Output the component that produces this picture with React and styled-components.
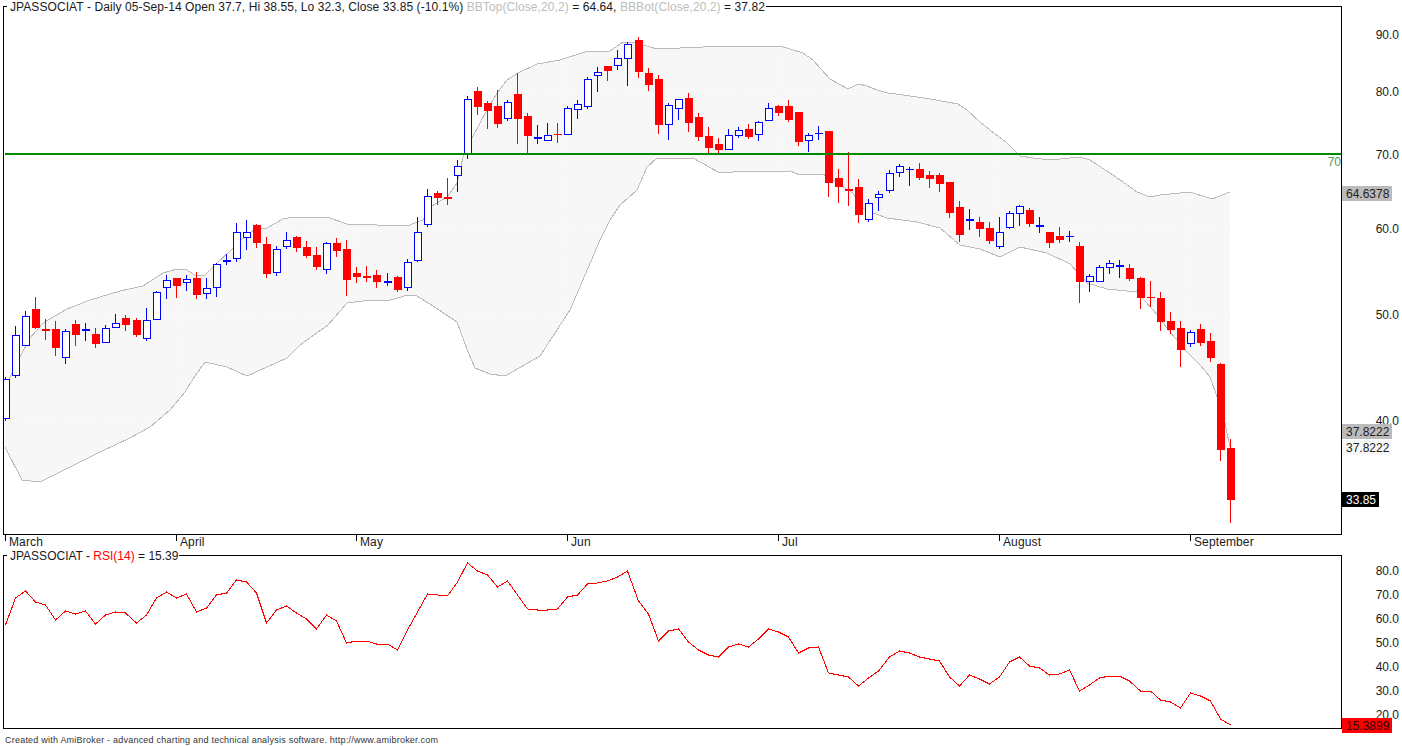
import React from "react";
import styled, { createGlobalStyle } from "styled-components";

// [high, top, bottom, low, up] in chart pixels, read off the picture
const bars = [
  [377,379,418,420,1],[326,335,375,377,1],[311,316,345,345,1],[297,309,328,328,0],[319,329,331,339,0],
  [321,329,348,355,0],[329,331,357,363,1],[320,324,335,345,0],[323,329,331,340,1],[328,334,344,347,0],
  [325,328,342,342,1],[314,323,327,327,1],[315,318,325,330,0],[318,320,335,336,0],[308,320,338,340,1],
  [291,292,319,319,1],[275,280,287,298,1],[278,278,286,297,0],[275,279,282,290,1],[272,278,295,298,0],
  [278,288,293,298,1],[263,264,287,296,1],[254,260,262,264,1],[223,232,258,261,1],[220,232,237,249,1],
  [224,225,243,247,0],[237,244,274,277,0],[246,249,272,275,1],[232,240,246,248,1],[236,237,248,251,0],
  [241,247,256,257,0],[247,255,267,269,0],[242,243,269,273,1],[238,243,251,256,0],[240,249,280,295,0],
  [267,273,277,282,0],[266,276,278,281,0],[270,275,282,287,0],[273,281,283,285,1],[276,277,290,291,0],
  [259,262,287,290,1],[217,232,260,261,1],[189,196,224,226,1],[191,193,198,204,0],[178,197,199,204,0],
  [160,166,175,191,1],[96,99,153,158,1],[87,91,107,114,0],[101,103,111,128,0],[90,106,124,127,0],
  [100,102,118,120,1],[73,94,119,143,0],[113,116,136,153,0],[125,137,139,143,1],[123,135,140,140,1],
  [123,134,135,142,0],[106,108,134,134,1],[100,104,109,118,1],[77,79,106,108,1],[67,72,75,91,1],
  [66,66,71,80,0],[50,58,65,69,1],[42,44,58,85,1],[37,40,72,77,0],[68,73,85,90,0],
  [75,79,125,133,0],[103,105,124,139,1],[99,99,108,119,1],[93,98,123,131,0],[113,117,137,140,0],
  [127,136,148,152,0],[138,144,150,154,0],[129,135,149,149,1],[127,130,135,137,1],[124,129,137,138,0],
  [121,122,134,140,1],[103,108,120,120,1],[105,106,113,115,0],[100,106,120,121,0],[112,112,142,145,0],
  [133,135,140,151,1],[126,133,134,139,1],[131,131,183,196,0],[169,178,187,202,0],[152,189,191,205,0],
  [179,187,215,222,0],[199,203,219,221,1],[191,194,197,210,1],[170,173,190,192,1],[164,166,172,176,1],
  [167,169,170,185,1],[163,169,178,179,0],[171,175,179,187,0],[173,175,184,191,0],[182,182,213,217,0],
  [201,207,235,241,0],[209,219,221,229,1],[217,222,229,236,0],[222,228,241,243,0],[217,232,246,248,1],
  [211,213,227,228,1],[205,206,213,225,1],[208,210,224,226,0],[217,225,227,232,1],[232,232,243,247,0],
  [227,236,240,242,0],[231,236,237,241,1],[242,246,282,302,0],[274,276,281,291,1],[265,267,281,281,1],
  [260,263,267,273,1],[260,265,267,277,1],[264,268,279,280,0],[277,278,298,308,0],[281,297,298,306,0],
  [292,298,322,330,0],[312,321,330,333,0],[321,328,350,366,0],[330,332,343,346,1],[324,329,343,345,0],
  [333,341,358,361,0],[363,364,450,460,0],[439,448,500,522,0],
];

const bandTop = [
  [5,395],[10,377],[20,357],[30,338],[43,323],[67,309],[90,300],[120,291],[143,286],[163,273],[177,269],
  [185,269],[195,275],[205,275],[217,263],[230,251],[245,236],[257,228],[267,228],[283,219],[293,217],
  [327,217],[347,224],[407,226],[423,220],[430,207],[447,197],[457,183],[464,153],[472,138],[487,110],
  [497,93],[507,80],[518,73],[537,64],[560,60],[585,52],[610,51],[623,42],[633,42],[657,49],[703,47],
  [713,46],[780,46],[803,53],[813,60],[830,79],[848,89],[858,84],[867,86],[877,90],[888,93],[903,95],
  [917,97],[930,99],[947,102],[958,104],[967,110],[980,122],[990,130],[1007,143],[1020,156],[1033,158],
  [1050,160],[1080,157],[1090,160],[1113,175],[1137,192],[1150,197],[1160,195],[1190,192],[1212,199],[1230,192],
];

const bandBottom = [
  [5,447],[22,480],[40,482],[60,472],[80,462],[100,452],[130,438],[150,427],[170,410],[185,392],[195,376],[205,362],
  [227,367],[247,376],[287,358],[300,345],[328,325],[347,303],[363,301],[390,300],[408,295],[417,296],
  [433,306],[457,322],[468,352],[475,368],[490,374],[505,376],[540,356],[570,310],[600,240],[610,220],
  [620,205],[637,190],[647,167],[657,158],[693,158],[718,172],[733,172],[790,171],[800,175],[823,174],
  [853,193],[860,207],[873,213],[887,218],[917,222],[940,228],[960,245],[980,249],[1000,257],[1020,247],
  [1047,253],[1070,264],[1087,283],[1107,289],[1137,292],[1153,310],[1170,332],[1187,352],[1200,365],
  [1210,377],[1217,397],[1225,423],[1230,447],
];

const rsi = [
  625,598,591,602,605,620,611,614,611,624,615,612,613,623,615,598,592,598,594,612,
  608,595,593,580,582,593,623,610,606,613,619,629,615,621,643,641,641,644,644,650,
  630,612,594,595,596,582,563,571,575,587,581,595,609,610,610,609,597,595,584,583,
  581,577,571,601,614,641,631,629,642,650,655,657,647,644,647,639,629,632,637,653,
  648,647,673,675,677,686,678,671,657,651,653,657,659,661,677,686,675,679,684,677,
  662,657,666,668,675,674,670,691,685,678,676,676,681,691,691,700,702,708,693,696,
  701,719,725,
];

const months = [
  ["March", 0], ["April", 17], ["May", 35], ["Jun", 56], ["Jul", 77], ["August", 99], ["September", 118],
];

// y = top of the row in page pixels
const priceGrid = [34, 91, 154, 228, 314, 420];
const priceAxis = [
  { y: 28, text: "90.0" },
  { y: 85, text: "80.0" },
  { y: 148, text: "70.0" },
  { y: 186, text: "64.6378", bg: "#bbb", fg: "#222" },
  { y: 222, text: "60.0" },
  { y: 308, text: "50.0" },
  { y: 414, text: "40.0" },
  { y: 424, text: "37.8222", bg: "#bbb", fg: "#222" },
  { y: 440, text: "37.8222", bg: "#f7f7f7", fg: "#222" },
  { y: 492, text: "33.85", bg: "#000", fg: "#fff" },
];
const rsiAxis = [
  { y: 564, text: "80.0" },
  { y: 588, text: "70.0" },
  { y: 612, text: "60.0" },
  { y: 636, text: "50.0" },
  { y: 660, text: "40.0" },
  { y: 684, text: "30.0" },
  { y: 708, text: "20.0" },
  { y: 718, text: "15.3899", bg: "#ff0000", fg: "#300" },
];

const barX = (i) => Math.floor(5.5 + 10.04 * i);
const pts = (list) => list.map((p) => p.join(",")).join(" ");

const GlobalStyle = createGlobalStyle`
  html, body { margin: 0; background: #fff; }
  body { font-family: "Liberation Sans", Arial, sans-serif; color: #1a1a1a; }
`;

const Page = styled.div`
  width: 1402px;
  height: 746px;
  padding: 6px 0 0 3px;
  box-sizing: border-box;
  overflow: hidden;
  font-size: 12px;
`;

const Row = styled.div`
  display: flex;
`;

const Panel = styled.div`
  position: relative;
  box-sizing: border-box;
  width: 1339px;
  height: ${(p) => p.$h}px;
  border: 1px solid #000;
`;

const Plot = styled.svg`
  display: block;
  width: 1337px;
  height: ${(p) => p.$h - 2}px;
  shape-rendering: crispEdges;
`;

const Title = styled.div`
  position: absolute;
  top: -7px;
  left: 3px;
  padding: 0 1px 0 3px;
  background: #fff;
  line-height: 14px;
  white-space: nowrap;
  letter-spacing: ${(p) => p.$track || 0}px;
`;

const Muted = styled.span`
  color: #bdbdbd;
`;

const Hot = styled.span`
  color: #f00;
`;

const LineTag = styled.span`
  position: absolute;
  right: 0;
  top: 148px;
  line-height: 14px;
  color: #3f9f5f;
`;

const Axis = styled.div`
  display: flex;
  flex-direction: column;
  flex: none;
  width: 60px;
  padding-top: ${(p) => p.$top}px;
  box-sizing: border-box;
`;

const AxisRow = styled.div`
  display: flex;
  flex: none;
  justify-content: ${(p) => (p.$tag ? "flex-start" : "flex-end")};
  padding-right: ${(p) => (p.$tag ? 0 : 3)}px;
  line-height: 14px;
`;

const ValueTag = styled.span`
  display: inline-block;
  height: 15px;
  padding: 0 3px 0 4px;
  line-height: 17px;
  background: ${(p) => p.$bg};
  color: ${(p) => p.$fg};
`;

const MonthAxis = styled.div`
  display: flex;
  height: 20px;
  margin-left: 2px;
`;

const Month = styled.div`
  display: flex;
  flex: none;
`;

const Tick = styled.i`
  display: block;
  width: 1px;
  height: 6px;
  background: #000;
`;

const MonthName = styled.span`
  margin-left: 3px;
  line-height: 15px;
  letter-spacing: 0.12px;
`;

const Footer = styled.div`
  padding: 4px 0 0 2px;
  font-size: 9px;
  line-height: 14px;
  letter-spacing: 0.22px;
  color: #333;
  white-space: nowrap;
`;

function Candle({ bar, i }) {
  const [high, top, bottom, low, up] = bar;
  const x = barX(i);
  const color = up ? "#0000ff" : "#ff0000";
  const thin = bottom - top <= 2;
  return (
    <g>
      <rect x={x} y={high} width="1" height={low - high + 1} fill={color} />
      {up && !thin ? (
        <rect x={x - 3 + 0.5} y={top + 0.5} width="7" height={bottom - top} fill="#fff" stroke={color} />
      ) : (
        <rect x={x - 3} y={top} width="8" height={Math.max(bottom - top, 1)} fill={color} />
      )}
    </g>
  );
}

// one flow column of labels, each row as tall as the gap to the next one
function ScaleAxis({ items, start, end }) {
  return (
    <Axis $top={items[0].y - start}>
      {items.map((item, n) => {
        const next = items[n + 1] ? items[n + 1].y : end;
        return (
          <AxisRow key={item.y} $tag={!!item.bg} style={{ height: next - item.y }}>
            {item.bg ? <ValueTag $bg={item.bg} $fg={item.fg}>{item.text}</ValueTag> : item.text}
          </AxisRow>
        );
      })}
    </Axis>
  );
}

export default function App() {
  const band = pts([...bandTop, ...[...bandBottom].reverse()]);
  const rsiLine = pts(rsi.map((y, i) => [barX(i) + 0.5, y]));

  return (
    <Page>
      <GlobalStyle />
      <Row>
        <Panel $h={529}>
          <Title $track={0.08}>
            JPASSOCIAT - Daily 05-Sep-14 Open 37.7, Hi 38.55, Lo 32.3, Close 33.85 (-10.1%){" "}
            <Muted>BBTop(Close,20,2)</Muted> = 64.64, <Muted>BBBot(Close,20,2)</Muted> = 37.82
          </Title>
          <Plot $h={529} viewBox="4 7 1337 527">
            <polygon points={band} fill="#f7f7f7" />
            <g stroke="#fff" strokeDasharray="1 9">
              {priceGrid.map((y) => (
                <line key={y} x1="5" x2="1231" y1={y + 0.5} y2={y + 0.5} />
              ))}
              {months.map(([name, i]) => (
                <line key={name} x1={barX(i) + 0.5} x2={barX(i) + 0.5} y1="7" y2="534" />
              ))}
            </g>
            <polyline points={pts(bandTop)} fill="none" stroke="#bbb" />
            <polyline points={pts(bandBottom)} fill="none" stroke="#bbb" />
            {bars.map((bar, i) => (
              <Candle key={i} bar={bar} i={i} />
            ))}
            <rect x="5" y="153" width="1336" height="2" fill="#008a00" />
          </Plot>
          <LineTag>70</LineTag>
        </Panel>
        <ScaleAxis items={priceAxis} start={6} end={535} />
      </Row>
      <MonthAxis>
        {months.map(([name, i], n) => {
          const next = months[n + 1] ? barX(months[n + 1][1]) : barX(i) + 150;
          return (
            <Month key={name} style={{ width: next - barX(i) }}>
              <Tick />
              <MonthName>{name}</MonthName>
            </Month>
          );
        })}
      </MonthAxis>
      <Row>
        <Panel $h={174}>
          <Title>
            JPASSOCIAT - <Hot>RSI(14)</Hot> = 15.39
          </Title>
          <Plot $h={174} viewBox="4 556 1337 172">
            <polyline points={rsiLine} fill="none" stroke="#ff0000" />
          </Plot>
        </Panel>
        <ScaleAxis items={rsiAxis} start={555} end={729} />
      </Row>
      <Footer>
        Created with AmiBroker - advanced charting and technical analysis software. http://www.amibroker.com
      </Footer>
    </Page>
  );
}
